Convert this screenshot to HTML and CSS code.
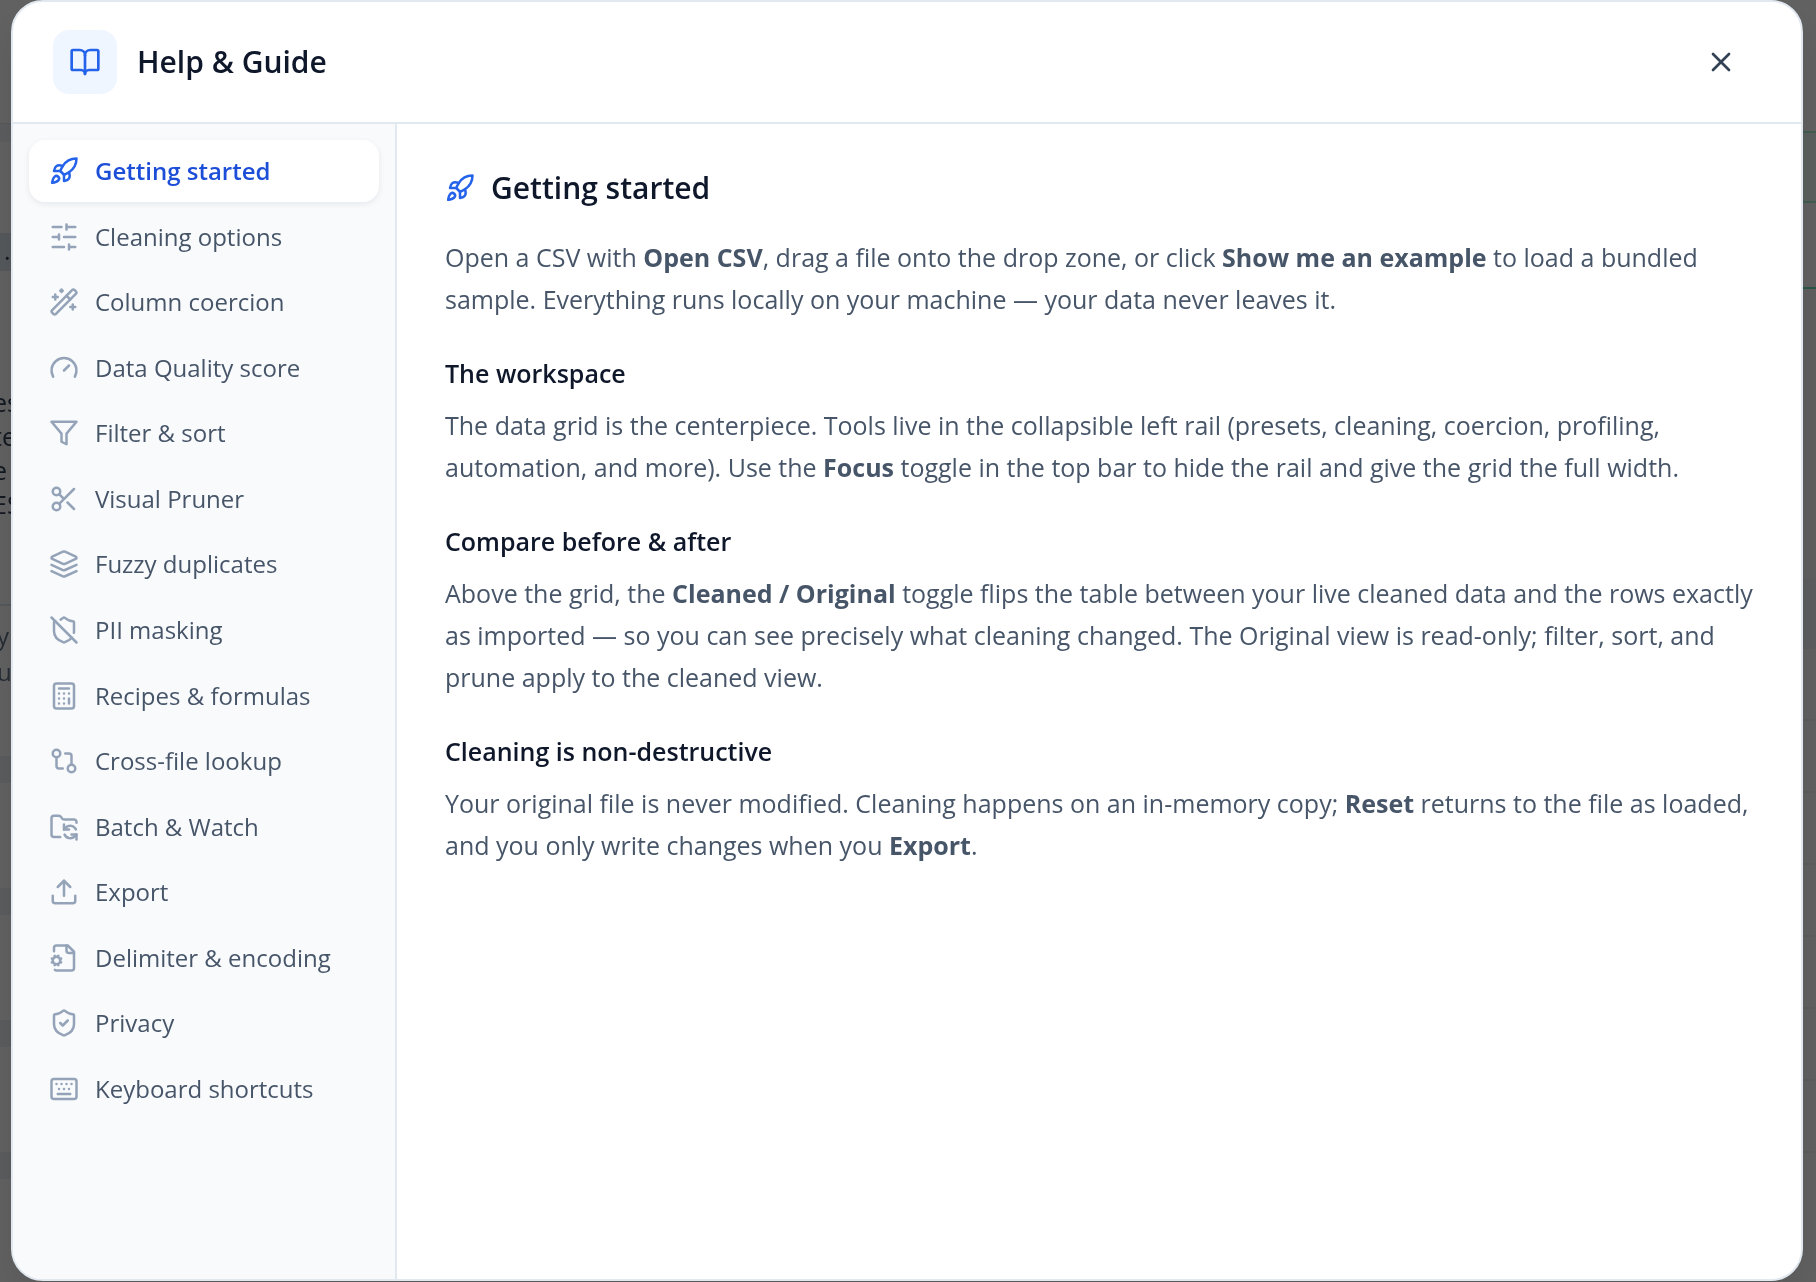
FILE: index.html
```html
<!DOCTYPE html>
<html lang="en">
<head>
  <meta charset="UTF-8" />
  <meta name="viewport" content="width=device-width, initial-scale=1.0" />
  <title>Help &amp; Guide</title>
  <link rel="stylesheet" href="styles.css">
</head>
<body>

<!-- page behind the dialog -->
<div class="page" aria-hidden="true">
  <div class="rail">
    <div class="rail-top"></div>
    <div class="band"></div>
    <div class="rail-head"></div>
    <div class="rail-label">.</div>
    <div class="rail-text">es<br>te<br>e<br>ES</div>
    <div class="rail-note">y<br>u</div>
    <div class="card"></div>
    <div class="card"></div>
    <div class="card"></div>
    <div class="card"></div>
  </div>
  <div class="grid">
    <div class="grid-top"></div>
    <div class="grid-banner"></div>
    <div class="grid-tools"></div>
    <div class="grid-space"></div>
    <div class="grid-header"></div>
    <div class="grid-row"></div>
    <div class="grid-row"></div>
    <div class="grid-row"></div>
    <div class="grid-row"></div>
    <div class="grid-row"></div>
    <div class="grid-row"></div>
    <div class="grid-row"></div>
    <div class="grid-row"></div>
  </div>
</div>

<div class="overlay">
  <div class="dialog" role="dialog" aria-modal="true" aria-labelledby="dialog-title">

    <header class="dialog-header">
      <span class="badge">
        <svg class="icon icon-lg" viewBox="0 0 24 24"><path d="M12 7v14"/><path d="M3 18a1 1 0 0 1-1-1V4a1 1 0 0 1 1-1h5a4 4 0 0 1 4 4 4 4 0 0 1 4-4h5a1 1 0 0 1 1 1v13a1 1 0 0 1-1 1h-6a3 3 0 0 0-3 3 3 3 0 0 0-3-3z"/></svg>
      </span>
      <h1 id="dialog-title">Help &amp; Guide</h1>
      <button type="button" class="close" aria-label="Close">
        <svg class="icon icon-lg" viewBox="0 0 24 24"><path d="M18 6 6 18"/><path d="m6 6 12 12"/></svg>
      </button>
    </header>

    <div class="dialog-body">
      <nav class="sidebar">
        <button type="button" class="nav-item active">
          <svg class="icon" viewBox="0 0 24 24"><path d="M4.500 16.500c-1.500 1.260-2 5-2 5s3.740-.5 5-2c.71-.84.7-2.130-.09-2.910a2.180 2.180 0 0 0-2.910-.09z"/><path d="m12 15-3-3a22 22 0 0 1 2-3.950A12.880 12.880 0 0 1 22 2c0 2.720-.78 7.500-6 11a22.350 22.350 0 0 1-4 2z"/><path d="M9 12H4s.55-3.030 2-4c1.620-1.080 5 0 5 0"/><path d="M12 15v5s3.030-.55 4-2c1.080-1.620 0-5 0-5"/></svg>
          Getting started
        </button>
        <button type="button" class="nav-item">
          <svg class="icon" viewBox="0 0 24 24"><path d="M21 4h-7M10 4H3M21 12h-9M8 12H3M21 20h-5M12 20H3M14 2v4M8 10v4M16 18v4"/></svg>
          Cleaning options
        </button>
        <button type="button" class="nav-item">
          <svg class="icon" viewBox="0 0 24 24"><path d="m21.640 3.640-1.280-1.280a1.210 1.210 0 0 0-1.720 0L2.360 18.640a1.210 1.210 0 0 0 0 1.720l1.280 1.280a1.200 1.200 0 0 0 1.720 0L21.640 5.360a1.200 1.200 0 0 0 0-1.720"/><path d="m14 7 3 3M5 6v4M19 14v4M10 2v2M7 8H3M21 16h-4M11 3H9"/></svg>
          Column coercion
        </button>
        <button type="button" class="nav-item">
          <svg class="icon" viewBox="0 0 24 24"><path d="m12 14 4-4"/><path d="M3.340 19a10 10 0 1 1 17.320 0"/></svg>
          Data Quality score
        </button>
        <button type="button" class="nav-item">
          <svg class="icon" viewBox="0 0 24 24"><path d="M22 3H2l8 9.460V19l4 2v-8.540z"/></svg>
          Filter &amp; sort
        </button>
        <button type="button" class="nav-item">
          <svg class="icon" viewBox="0 0 24 24"><circle cx="6" cy="6" r="3"/><circle cx="6" cy="18" r="3"/><path d="M8.120 8.120 12 12M20 4 8.120 15.880M14.800 14.800 20 20"/></svg>
          Visual Pruner
        </button>
        <button type="button" class="nav-item">
          <svg class="icon" viewBox="0 0 24 24"><path d="M12.830 2.180a2 2 0 0 0-1.660 0L2.600 6.080a1 1 0 0 0 0 1.830l8.580 3.910a2 2 0 0 0 1.660 0l8.580-3.900a1 1 0 0 0 0-1.830z"/><path d="m22 17.650-9.170 4.160a2 2 0 0 1-1.660 0L2 17.650"/><path d="m22 12.650-9.170 4.160a2 2 0 0 1-1.660 0L2 12.650"/></svg>
          Fuzzy duplicates
        </button>
        <button type="button" class="nav-item">
          <svg class="icon" viewBox="0 0 24 24"><path d="m2 2 20 20"/><path d="M5 5a1 1 0 0 0-1 1v7c0 5 3.500 7.500 7.670 8.940a1 1 0 0 0 .67.01c2.350-.82 4.480-1.970 5.900-3.710"/><path d="M9.309 3.652A12.252 12.252 0 0 0 11.240 2.280a1.170 1.170 0 0 1 1.520 0C14.510 3.810 17 5 19 5a1 1 0 0 1 1 1v7a9.784 9.784 0 0 1-.08 1.264"/></svg>
          PII masking
        </button>
        <button type="button" class="nav-item">
          <svg class="icon" viewBox="0 0 24 24"><rect x="4" y="2" width="16" height="20" rx="2"/><path d="M8 6h8M16 14v4M16 10h.01M12 10h.01M8 10h.01M12 14h.01M8 14h.01M12 18h.01M8 18h.01"/></svg>
          Recipes &amp; formulas
        </button>
        <button type="button" class="nav-item">
          <svg class="icon" viewBox="0 0 24 24"><circle cx="18" cy="18" r="3"/><circle cx="6" cy="6" r="3"/><path d="M13 6h3a2 2 0 0 1 2 2v7"/><path d="M11 18H8a2 2 0 0 1-2-2V9"/></svg>
          Cross-file lookup
        </button>
        <button type="button" class="nav-item">
          <svg class="icon" viewBox="0 0 24 24"><path d="M9 20H4a2 2 0 0 1-2-2V5a2 2 0 0 1 2-2h3.900a2 2 0 0 1 1.690.9l.81 1.200a2 2 0 0 0 1.670.9H20a2 2 0 0 1 2 2v.5"/><path d="M12 10v4h4"/><path d="m12 14 1.535-1.605a5 5 0 0 1 8 1.500"/><path d="M22 22v-4h-4"/><path d="m22 18-1.535 1.605a5 5 0 0 1-8-1.500"/></svg>
          Batch &amp; Watch
        </button>
        <button type="button" class="nav-item">
          <svg class="icon" viewBox="0 0 24 24"><path d="M12 3v12"/><path d="m17 8-5-5-5 5"/><path d="M21 15v4a2 2 0 0 1-2 2H5a2 2 0 0 1-2-2v-4"/></svg>
          Export
        </button>
        <button type="button" class="nav-item">
          <svg class="icon" viewBox="0 0 24 24"><path d="M14 2v4a2 2 0 0 0 2 2h4"/><path d="M4.677 21.500a2 2 0 0 0 1.313.5H18a2 2 0 0 0 2-2V7l-5-5H6a2 2 0 0 0-2 2v2.500"/><circle cx="6" cy="14" r="3"/><path d="m3.200 12.900-.9-.4M3.200 15.100l-.9.4M4.900 11.200l-.4-.9M4.900 16.800l-.4.9M7.500 10.300l-.4.9M7.500 17.700l-.4-.9M9.700 12.500l-.9.4M9.700 15.500l-.9-.4"/></svg>
          Delimiter &amp; encoding
        </button>
        <button type="button" class="nav-item">
          <svg class="icon" viewBox="0 0 24 24"><path d="M20 13c0 5-3.500 7.500-7.660 8.950a1 1 0 0 1-.67-.01C7.500 20.500 4 18 4 13V6a1 1 0 0 1 1-1c2 0 4.500-1.200 6.240-2.720a1.170 1.170 0 0 1 1.520 0C14.510 3.810 17 5 19 5a1 1 0 0 1 1 1z"/><path d="m9 12 2 2 4-4"/></svg>
          Privacy
        </button>
        <button type="button" class="nav-item">
          <svg class="icon" viewBox="0 0 24 24"><rect x="2" y="4" width="20" height="16" rx="2"/><path d="M6 8h.01M10 8h.01M14 8h.01M18 8h.01M8 12h.01M12 12h.01M16 12h.01M7 16h10"/></svg>
          Keyboard shortcuts
        </button>
      </nav>

      <main class="content">
        <h2>
          <svg class="icon" viewBox="0 0 24 24"><path d="M4.500 16.500c-1.500 1.260-2 5-2 5s3.740-.5 5-2c.71-.84.7-2.130-.09-2.910a2.180 2.180 0 0 0-2.910-.09z"/><path d="m12 15-3-3a22 22 0 0 1 2-3.950A12.880 12.880 0 0 1 22 2c0 2.720-.78 7.500-6 11a22.350 22.350 0 0 1-4 2z"/><path d="M9 12H4s.55-3.030 2-4c1.620-1.080 5 0 5 0"/><path d="M12 15v5s3.030-.55 4-2c1.080-1.620 0-5 0-5"/></svg>
          Getting started
        </h2>
        <p>Open a CSV with <strong>Open CSV</strong>, drag a file onto the drop zone, or click <strong>Show me an example</strong> to load a bundled sample. Everything runs locally on your machine — your data never leaves it.</p>

        <h3>The workspace</h3>
        <p>The data grid is the centerpiece. Tools live in the collapsible left rail (presets, cleaning, coercion, profiling, automation, and more). Use the <strong>Focus</strong> toggle in the top bar to hide the rail and give the grid the full width.</p>

        <h3>Compare before &amp; after</h3>
        <p>Above the grid, the <strong>Cleaned / Original</strong> toggle flips the table between your live cleaned data and the rows exactly as imported — so you can see precisely what cleaning changed. The Original view is read-only; filter, sort, and prune apply to the cleaned view.</p>

        <h3>Cleaning is non-destructive</h3>
        <p>Your original file is never modified. Cleaning happens on an in-memory copy; <strong>Reset</strong> returns to the file as loaded, and you only write changes when you <strong>Export</strong>.</p>
      </main>
    </div>

  </div>
</div>

</body>
</html>
```

FILE: styles.css
```css
*,
*::before,
*::after {
  box-sizing: border-box;
  margin: 0;
  padding: 0;
}

body {
  font-family: "Open Sans", "Noto Sans", sans-serif;
  font-size: 25px;
  line-height: 42px;
  color: #475569;
  background: #fff;
}

/* page behind the dialog */
.page {
  position: fixed;
  inset: 0;
  display: flex;
  justify-content: space-between;
  overflow: hidden;
}

.rail,
.grid {
  width: 40px;
}

.rail {
  color: #334155;
  line-height: 34px;
  white-space: nowrap;
}

.rail-top {
  height: 124px;
  border-bottom: 1px solid #e2e8f0;
}

.band {
  height: 18px;
  background: #f1f5f9;
}

.rail-head {
  height: 91px;
}

.rail-label {
  height: 38px;
  padding-left: 4px;
  background: #e2e8f0;
}

.rail-text {
  height: 335px;
  padding-top: 114px;
  border-bottom: 2px solid #e2e8f0;
  margin-left: -7px;
}

.rail-note {
  height: 150px;
  padding-top: 12px;
  margin-left: -3px;
  color: #64748b;
  font-size: 24px;
  line-height: 36px;
}

.card {
  height: 132px;
  border-top: 27px solid #eef2f7;
}

.grid-top {
  height: 131px;
}

.grid-banner {
  height: 72px;
  background: #ecfdf5;
  border-top: 2px solid #a7f3d0;
  border-bottom: 2px solid #a7f3d0;
}

.grid-tools {
  height: 86px;
  border-bottom: 2px solid #6ee7b7;
}

.grid-space {
  height: 289px;
  background: #f8fafc;
}

.grid-header {
  height: 69px;
  background: #f1f5f9;
}

.grid-row {
  height: 72px;
  border-top: 2px solid #f1f5f9;
}

/* dialog */
.overlay {
  position: relative;
  display: flex;
  min-height: 100vh;
  padding: 0 13px 1px 11px;
  background: rgba(0, 0, 0, 0.62);
}

.dialog {
  flex: 1;
  display: flex;
  flex-direction: column;
  background: #fff;
  border: 2px solid #e2e8f0;
  border-radius: 32px;
  overflow: hidden;
  box-shadow: 0 20px 40px rgba(0, 0, 0, 0.1);
}

.dialog-header {
  display: flex;
  align-items: center;
  gap: 20px;
  padding: 28px 40px;
  border-bottom: 2px solid #e2e8f0;
}

.badge {
  display: flex;
  align-items: center;
  justify-content: center;
  width: 64px;
  height: 64px;
  border-radius: 16px;
  background: #eff6ff;
  color: #2563eb;
}

h1,
h2,
h3 {
  color: #0f172a;
  font-weight: 600;
}

h1 {
  font-size: 30px;
}

.icon {
  flex: none;
  width: 30px;
  height: 30px;
  fill: none;
  stroke: currentColor;
  stroke-width: 2;
  stroke-linecap: round;
  stroke-linejoin: round;
}

.icon-lg {
  width: 32px;
  height: 32px;
}

button {
  border: none;
  background: none;
  font: inherit;
  color: inherit;
  cursor: pointer;
}

.close {
  display: flex;
  align-items: center;
  justify-content: center;
  width: 80px;
  height: 64px;
  margin-left: auto;
  color: #334155;
}

.dialog-body {
  flex: 1;
  display: flex;
}

.sidebar {
  display: flex;
  flex-direction: column;
  justify-content: space-between;
  width: 384px;
  flex: none;
  padding: 16px 16px 159px;
  background: #f8fafc;
  border-right: 2px solid #e2e8f0;
}

.nav-item {
  display: flex;
  align-items: center;
  gap: 16px;
  padding: 10px 20px;
  border-radius: 16px;
  font-size: 24px;
  text-align: left;
  white-space: nowrap;
}

.nav-item .icon {
  color: #94a3b8;
}

.nav-item.active {
  background: #fff;
  color: #1d4ed8;
  font-weight: 600;
  box-shadow: 0 2px 6px rgba(15, 23, 42, 0.08);
}

.nav-item.active .icon,
h2 .icon {
  color: #2563eb;
}

.content {
  flex: 1;
  padding: 40px 48px;
}

h2 {
  display: flex;
  align-items: center;
  gap: 16px;
  margin-bottom: 24px;
  font-size: 30px;
  line-height: 48px;
}

h3 {
  margin: 32px 0 10px;
  font-size: 25px;
}

strong {
  font-weight: 700;
}
```
